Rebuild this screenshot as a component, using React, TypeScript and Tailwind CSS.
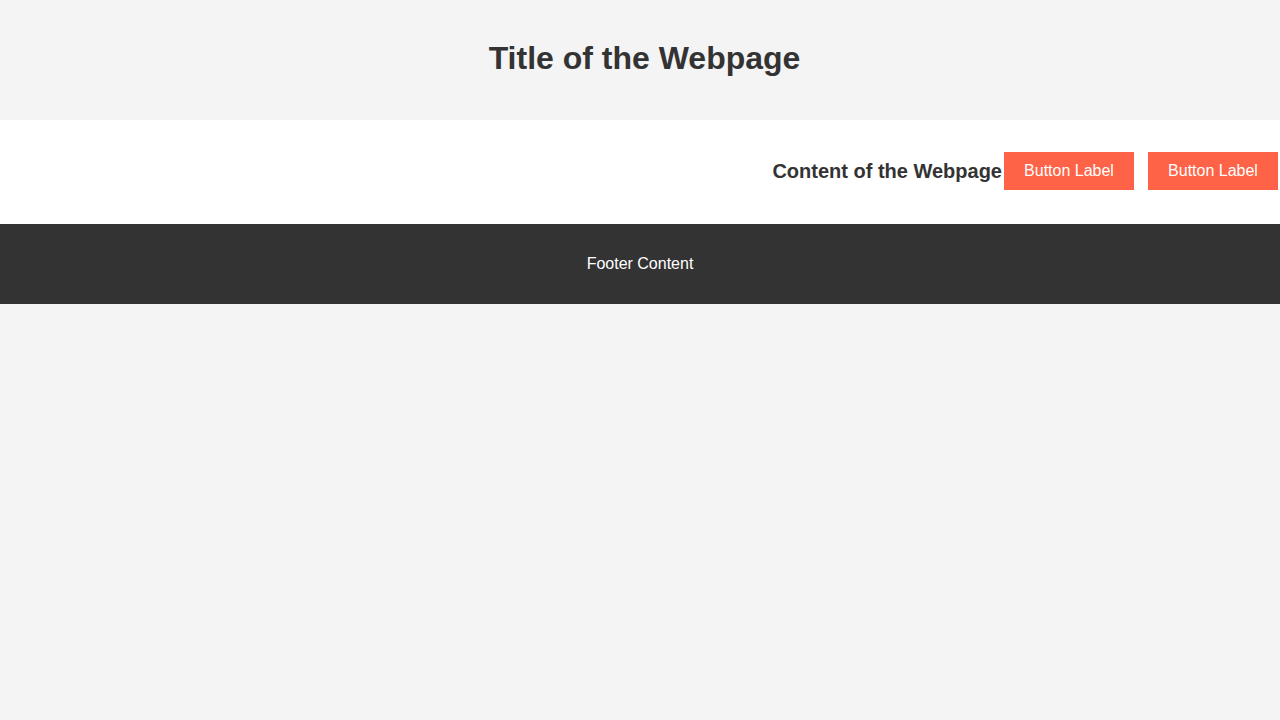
export default function App() {
  return (
    <div className="min-h-screen bg-[#f4f4f4] font-['Liberation_Sans',Arial,sans-serif] text-[#333]">
      <header className="h-[120px] flex items-center justify-center bg-[#f4f4f4] pb-[4px] pl-[9px]">
        <h1 className="text-[32px] font-bold leading-[37px]">Title of the Webpage</h1>
      </header>

      <main className="h-[104px] bg-white flex items-center justify-end pr-[2px] pb-[2px]">
        <h2 className="text-[20px] font-bold leading-[23px] mr-[2px]">Content of the Webpage</h2>
        <div className="flex gap-[14px]">
          <button className="w-[130px] h-[38px] bg-[#ff6347] text-white text-base">Button Label</button>
          <button className="w-[130px] h-[38px] bg-[#ff6347] text-white text-base">Button Label</button>
        </div>
      </main>

      <footer className="h-[80px] bg-[#333] flex items-center justify-center">
        <p className="text-white text-base">Footer Content</p>
      </footer>
    </div>
  )
}
